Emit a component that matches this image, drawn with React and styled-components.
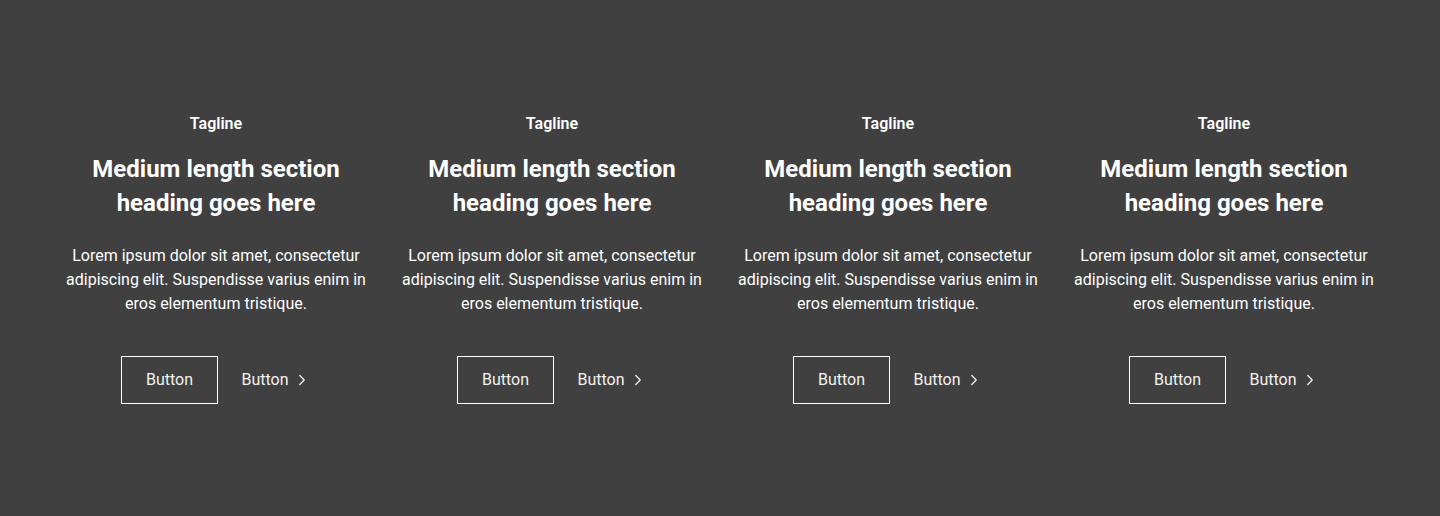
import React from 'react';
import styled, { createGlobalStyle } from 'styled-components';
import { ChevronRight } from 'lucide-react';

const GlobalStyle = createGlobalStyle`
  body {
    margin: 0;
    background: #404040;
    font-family: Roboto, "Liberation Sans", sans-serif;
    color: #ffffff;
  }
`;

const Section = styled.section`
  padding: 112px 64px;
  display: grid;
  grid-template-columns: repeat(4, 1fr);
  gap: 32px;
  background: #404040;
`;

const Column = styled.div`
  display: flex;
  flex-direction: column;
  align-items: center;
  text-align: center;
`;

const Tagline = styled.p`
  margin: 0 0 16px;
  font-size: 16px;
  line-height: 24px;
  font-weight: 600;
`;

const Heading = styled.h2`
  margin: 0 0 24px;
  font-size: 24px;
  line-height: 34px;
  font-weight: 700;
`;

const Body = styled.p`
  margin: 0;
  font-size: 16px;
  line-height: 24px;
  font-weight: 400;
`;

const Actions = styled.div`
  margin-top: 40px;
  display: flex;
  align-items: center;
  gap: 24px;
`;

const OutlineButton = styled.button`
  height: 48px;
  padding: 0 23.5px 1px;
  border: 1px solid #ffffff;
  background: transparent;
  color: #f2f2f2;
  font-family: inherit;
  font-size: 16px;
  line-height: 24px;
`;

const LinkButton = styled.button`
  display: flex;
  align-items: center;
  gap: 4px;
  padding: 0 0 1px;
  border: none;
  background: transparent;
  color: #f2f2f2;
  font-family: inherit;
  font-size: 16px;
  line-height: 24px;

  svg {
    margin-top: 1px;
  }
`;

const Feature = () => (
  <Column>
    <Tagline>Tagline</Tagline>
    <Heading>
      Medium length section
      <br />
      heading goes here
    </Heading>
    <Body>
      Lorem ipsum dolor sit amet, consectetur adipiscing elit. Suspendisse varius enim in eros elementum tristique.
    </Body>
    <Actions>
      <OutlineButton>Button</OutlineButton>
      <LinkButton>
        Button
        <ChevronRight size={18} strokeWidth={1.75} />
      </LinkButton>
    </Actions>
  </Column>
);

export default function App() {
  return (
    <>
      <GlobalStyle />
      <Section>
        {[0, 1, 2, 3].map((i) => (
          <Feature key={i} />
        ))}
      </Section>
    </>
  );
}
